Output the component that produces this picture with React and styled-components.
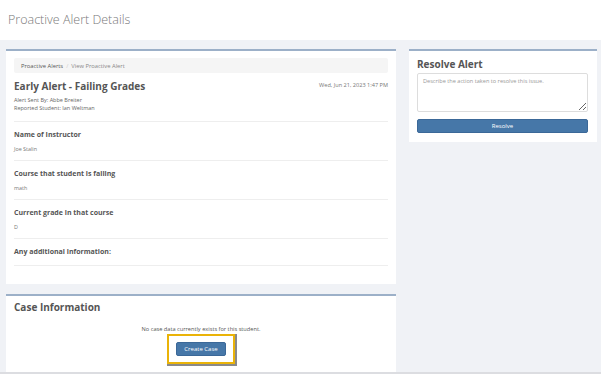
import React from "react";
import styled, { createGlobalStyle } from "styled-components";

const Global = createGlobalStyle`
  html, body { margin: 0; padding: 0; }
  body {
    background: #f0f2f6;
    font-family: "Open Sans", "Liberation Sans", sans-serif;
    color: #555;
    overflow: hidden;
  }
  * { box-sizing: border-box; }
`;

const Page = styled.div`
  height: 100vh;
  display: flex;
  flex-direction: column;
  overflow: hidden;
  border-bottom: 2px solid #dcdde1;
`;

const Header = styled.header`
  flex: none;
  height: 40px;
  background: #fff;
  display: flex;
  align-items: center;
  padding-left: 8px;
`;

const PageTitle = styled.h1`
  margin: 0;
  font-size: 12.5px;
  font-weight: 300;
  color: #7a7a7a;
  line-height: 1;
`;

const Main = styled.main`
  flex: 1;
  min-height: 0;
  overflow: hidden;
  display: grid;
  grid-template-columns: 390px 188px;
  column-gap: 13px;
  padding: 9px 4px 0 6px;
  align-items: start;
`;

const Column = styled.div`
  display: flex;
  flex-direction: column;
  gap: 10px;
`;

const Panel = styled.section`
  background: #fff;
  border-top: 2px solid #9cb0c8;
  padding: ${(p) => p.$pad};
`;

const Breadcrumb = styled.nav`
  height: 15px;
  background: #f5f5f5;
  border-radius: 2px;
  display: flex;
  align-items: center;
  padding-left: 7px;
  font-size: 5.8px;
  color: #888;
  gap: 3px;
`;

const Crumb = styled.span`
  color: ${(p) => (p.$active ? "#555" : "#888")};
`;

const Sep = styled.span`
  color: #ccc;
`;

const AlertHead = styled.div`
  padding: 6px 0 9px;
  border-bottom: 1px solid #eee;
`;

const TitleRow = styled.div`
  display: flex;
  justify-content: space-between;
  align-items: flex-start;
`;

const AlertTitle = styled.h2`
  margin: 0;
  font-size: 10px;
  line-height: 14px;
  font-weight: 700;
  color: #555;
`;

const DateText = styled.span`
  font-size: 5.6px;
  line-height: 12px;
  color: #777;
`;

const MetaList = styled.div`
  margin-top: 3px;
`;

const Meta = styled.div`
  font-size: 5.5px;
  line-height: 8px;
  color: #666;
`;

const Field = styled.div`
  padding: 8px 0 ${(p) => (p.$last ? "8px" : "7px")};
  border-bottom: 1px solid #eee;
`;

const Label = styled.div`
  font-size: 7px;
  line-height: 10px;
  font-weight: 700;
  color: #555;
`;

const Value = styled.div`
  margin-top: 5px;
  font-size: 5.4px;
  line-height: 8px;
  color: #777;
`;

const SectionTitle = styled.h2`
  margin: 0;
  font-size: 10px;
  line-height: 14px;
  font-weight: 700;
  color: #555;
`;

const EmptyBox = styled.div`
  display: flex;
  flex-direction: column;
  align-items: center;
  padding-top: 11px;
`;

const EmptyText = styled.p`
  margin: 0;
  font-size: 5.65px;
  line-height: 8px;
  color: #555;
`;

const Highlight = styled.div`
  margin-top: 1px;
  padding: 6px 7px;
  border: 2px solid #eab308;
  box-shadow: 1px 1px 0 1px #8a8a8a;
`;

const Button = styled.button`
  display: block;
  width: ${(p) => (p.$block ? "100%" : "auto")};
  height: 14px;
  padding: 0 ${(p) => (p.$block ? "0" : "7px")};
  border: 1px solid #3b6898;
  border-radius: 2px;
  background: #4677a8;
  color: #fff;
  font-family: inherit;
  font-size: 6px;
  line-height: 12px;
  cursor: pointer;
`;

const TextArea = styled.textarea`
  display: block;
  width: 171px;
  height: 39px;
  margin: 2px 0 7px;
  padding: 3px 5px;
  border: 1px solid #ddd;
  border-radius: 2px;
  font-family: inherit;
  font-size: 5.6px;
  line-height: 8px;
  color: #555;
  &::placeholder { color: #999; }
`;

const fields = [
  ["Name of Instructor", "Joe Stalin"],
  ["Course that student is failing", "math"],
  ["Current grade in that course", "D"],
];

export default function App() {
  return (
    <Page>
      <Global />
      <Header>
        <PageTitle>Proactive Alert Details</PageTitle>
      </Header>
      <Main>
        <Column>
          <Panel $pad="7px 8px 18px">
            <Breadcrumb>
              <Crumb $active>Proactive Alerts</Crumb>
              <Sep>/</Sep>
              <Crumb>View Proactive Alert</Crumb>
            </Breadcrumb>
            <AlertHead>
              <TitleRow>
                <AlertTitle>Early Alert - Failing Grades</AlertTitle>
                <DateText>Wed, Jun 21, 2023 1:47 PM</DateText>
              </TitleRow>
              <MetaList>
                <Meta>Alert Sent By: Abbe Breiter</Meta>
                <Meta>Reported Student: Ian Weltman</Meta>
              </MetaList>
            </AlertHead>
            {fields.map(([l, v]) => (
              <Field key={l}>
                <Label>{l}</Label>
                <Value>{v}</Value>
              </Field>
            ))}
            <Field $last>
              <Label>Any additional information:</Label>
            </Field>
          </Panel>
          <Panel $pad="4px 8px 20px">
            <SectionTitle>Case Information</SectionTitle>
            <EmptyBox>
              <EmptyText>No case data currently exists for this student.</EmptyText>
              <Highlight>
                <Button>Create Case</Button>
              </Highlight>
            </EmptyBox>
          </Panel>
        </Column>
        <Column>
          <Panel $pad="6px 9px 9px 8px">
            <SectionTitle>Resolve Alert</SectionTitle>
            <TextArea placeholder="Describe the action taken to resolve this issue." />
            <Button $block>Resolve</Button>
          </Panel>
        </Column>
      </Main>
    </Page>
  );
}
